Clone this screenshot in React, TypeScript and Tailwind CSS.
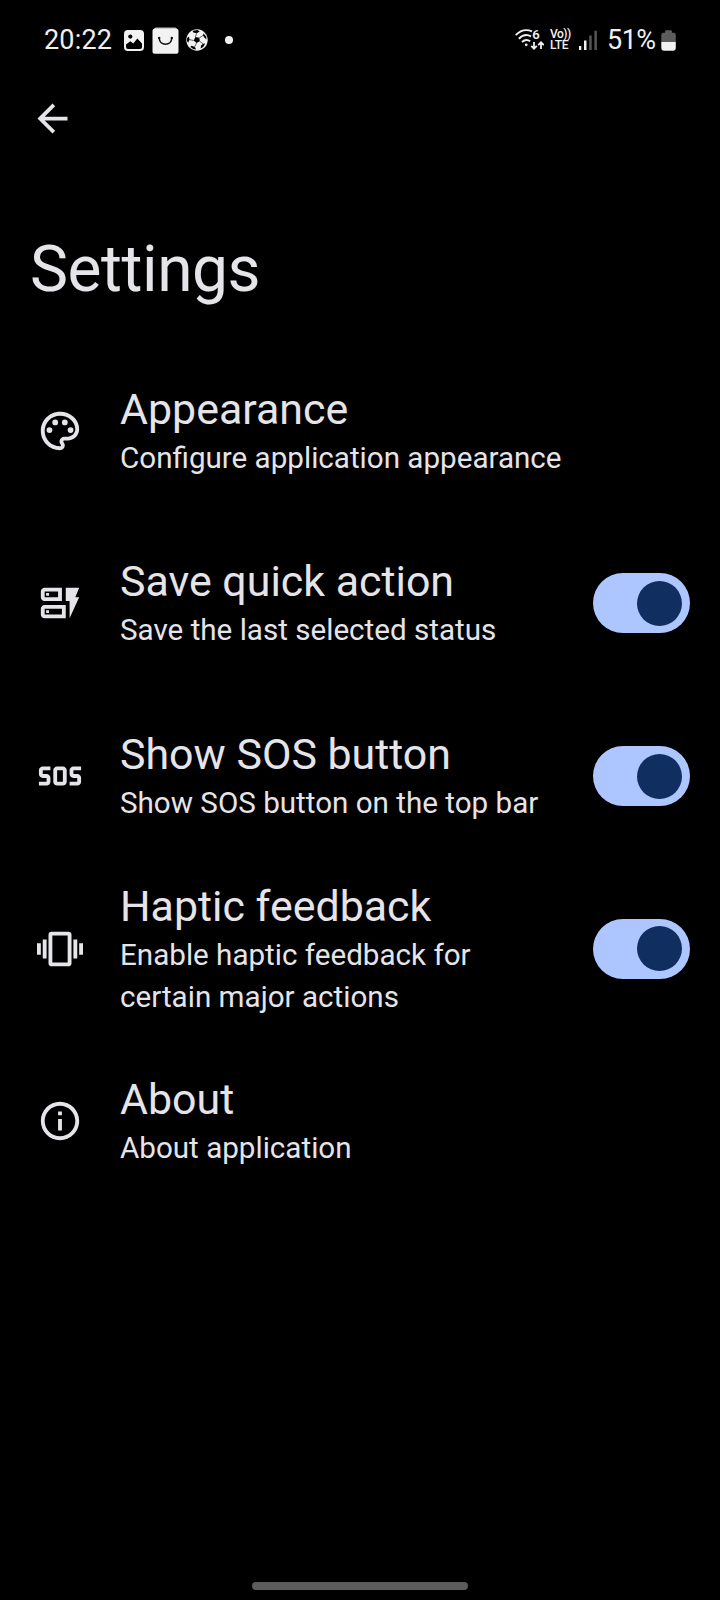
import type { ReactNode } from "react";
import type { IconType } from "react-icons";
import {
  MdArrowBack,
  MdOutlineDynamicForm,
  MdOutlineInfo,
  MdOutlinePalette,
  MdSos,
  MdVibration,
} from "react-icons/md";
import * as Switch from "@radix-ui/react-switch";
import clsx from "clsx";

interface SettingItem {
  title: string;
  description: string;
  icon: IconType;
  toggle?: boolean;
}

const settings: SettingItem[] = [
  {
    title: "Appearance",
    description: "Configure application appearance",
    icon: MdOutlinePalette,
  },
  {
    title: "Save quick action",
    description: "Save the last selected status",
    icon: MdOutlineDynamicForm,
    toggle: true,
  },
  {
    title: "Show SOS button",
    description: "Show SOS button on the top bar",
    icon: MdSos,
    toggle: true,
  },
  {
    title: "Haptic feedback",
    description: "Enable haptic feedback for certain major actions",
    icon: MdVibration,
    toggle: true,
  },
  {
    title: "About",
    description: "About application",
    icon: MdOutlineInfo,
  },
];

function GalleryIcon() {
  return (
    <svg width="20" height="21" viewBox="0 0 20 21">
      <rect width="20" height="21" rx="4" fill="#f2f2f2" />
      <circle cx="6.3" cy="6.6" r="2.1" fill="#000" />
      <path
        d="M2 14.6l4.3-3.3 3 2.3L13.3 8.6 18 13.6V17a2 2 0 0 1-2 2H4a2 2 0 0 1-2-2z"
        fill="#000"
      />
    </svg>
  );
}

function StoreIcon() {
  return (
    <svg width="27" height="27" viewBox="0 0 27 27">
      <path d="M2 2.5Q2 .5 4 .5H23Q25 .5 25 2.5z" fill="#bdbdbd" />
      <rect x=".5" y="1.7" width="26" height="25" rx="2" fill="#f2f2f2" />
      <path
        d="M7.2 10.8C7.2 19.3 19.8 19.3 19.8 10.8"
        fill="none"
        stroke="#111"
        strokeWidth="1.5"
      />
      <circle cx="7.2" cy="11" r="1.2" fill="#111" />
      <circle cx="19.8" cy="11" r="1.2" fill="#111" />
    </svg>
  );
}

function FootballIcon() {
  return (
    <svg width="22" height="22" viewBox="0 0 22 22">
      <circle cx="11" cy="11" r="10.7" fill="#f2f2f2" />
      <g fill="#000">
        <path d="M9.4 8l3.9.8.5 3.5-3.3 1.8-2.8-2.6z" />
        <path d="M6.5 1.800L11.500 1l2.200 1.400-3 1.900L7.300 3.500z" />
        <path d="M17.300 4.300l2.800 3.200.4 3-2-1.700-1.400-2.600z" />
        <path d="M19.200 14.600l-2 3.500-2.600 1.300.4-2.800 2.200-1.800z" />
        <path d="M5.400 16.800l3.200 1 1.500 2.500-2.500-.1-3.200-2.100z" />
        <path d="M1.100 8.900l1.900-1.400.5 3.100-1.300 3.200L1 12z" />
      </g>
      <path
        d="M9.400 8L10.600 4.300M13.300 8.800l3.800-2.300M13.800 12.300l3.200 2.500M10.500 14.100l-1.800 3.700M7.700 11.500l-4.300-.9"
        stroke="#000"
        strokeWidth=".6"
      />
    </svg>
  );
}

function WifiIcon() {
  return (
    <svg width="29" height="28" viewBox="0 -3 29 28" fill="none">
      <g stroke="#f0f0f0" strokeWidth="1.9">
        <path d="M.7 6.2Q8 -1.4 17 2.4" />
        <path d="M3.8 9.7Q9.8 3.8 16 7.4" />
        <path d="M7 13Q11 9.3 15.2 12.3" />
        <path d="M19 13v6.200M16.200 16.800l2.800 2.900 2.800-2.900" strokeWidth="1.8" />
        <path d="M26 20v-6.200M23.200 16.200l2.800-2.900 2.800 2.900" strokeWidth="1.8" />
      </g>
      <circle cx="11.2" cy="15.8" r="1.4" fill="#f0f0f0" />
      <text
        x="17.2"
        y="9.7"
        fill="#f0f0f0"
        fontFamily="Roboto, sans-serif"
        fontSize="13"
        fontWeight="600"
      >
        6
      </text>
    </svg>
  );
}

function SignalIcon() {
  return (
    <svg width="18" height="20" viewBox="0 0 18 20">
      <path d="M0 16h2.300v4H0zM5 10.500h2.500V20H5z" fill="#f0f0f0" />
      <path d="M10.200 5.500h2.500V20h-2.500zM15.400.8h2.500V20h-2.500z" fill="#555" />
    </svg>
  );
}

function BatteryIcon() {
  return (
    <svg width="15" height="21" viewBox="0 0 15 21">
      <path
        d="M4 1.500Q4 .3 5.200.3h4.600Q11 .3 11 1.500V2.700h1.500Q14.800 2.700 14.800 5v7H.3V5Q.3 2.700 2.500 2.700H4z"
        fill="#5c5c5c"
      />
      <path d="M.3 12h14.500v6.300q0 2.400-2.400 2.400H2.700Q.3 20.700.3 18.300z" fill="#f2f2f2" />
    </svg>
  );
}

function StatusBar() {
  return (
    <div className="flex h-20 items-center justify-between px-11 text-[27px] text-[#f0f0f0]">
      <div className="flex items-center">
        <span className="w-20 tracking-[0.2px]">20:22</span>
        <GalleryIcon />
        <span className="ml-2">
          <StoreIcon />
        </span>
        <span className="ml-[7px]">
          <FootballIcon />
        </span>
        <span className="ml-[17px] size-2 rounded-full bg-[#f0f0f0]" />
      </div>
      <div className="flex items-center">
        <WifiIcon />
        <div className="ml-[6px] flex w-[21px] flex-col text-[12px] leading-[11.5px] font-medium">
          <span className="tracking-[-0.5px]">Vo))</span>
          <span className="tracking-[-0.3px]">LTE</span>
        </div>
        <span className="ml-2">
          <SignalIcon />
        </span>
        <span className="ml-[10px] w-[54px] tracking-[-0.5px]">51%</span>
        <BatteryIcon />
      </div>
    </div>
  );
}

function Toggle({ label }: { label: string }) {
  return (
    <Switch.Root
      defaultChecked
      aria-label={label}
      className={clsx(
        "flex h-[60px] w-[97.5px] shrink-0 items-center rounded-full bg-[#3a3b40] px-2",
        "data-[state=checked]:justify-end data-[state=checked]:bg-[#adc6ff]"
      )}
    >
      <Switch.Thumb className="block size-[45px] rounded-full bg-[#102f60]" />
    </Switch.Root>
  );
}

function Row({ item, children }: { item: SettingItem; children?: ReactNode }) {
  const Icon = item.icon;
  return (
    <div className="flex h-[172.7px] items-center pl-[37px] pr-[30px]">
      <Icon className="size-[46px] shrink-0" />
      <div className="ml-[37px] flex-1 pr-10">
        <h2 className="text-[42.9px] leading-[52px]">{item.title}</h2>
        <p className="mt-[2px] text-[29.6px] leading-[42px]">
          {item.description}
        </p>
      </div>
      {children}
    </div>
  );
}

export default function App() {
  return (
    <div className="flex h-[1600px] w-[720px] flex-col overflow-hidden bg-black font-['Roboto',sans-serif] text-[#e5e4e9]">
      <StatusBar />

      {/* Top bar */}
      <header className="flex h-[264.3px] flex-col px-[30px]">
        <button aria-label="Back" className="mt-4 size-[45px]">
          <MdArrowBack className="size-[45px]" />
        </button>
        <h1 className="mt-[91px] text-[64px] leading-[76px] tracking-[-0.45px]">
          Settings
        </h1>
      </header>

      <main className="flex-1">
        {settings.map((item) => (
          <Row key={item.title} item={item}>
            {item.toggle && <Toggle label={item.title} />}
          </Row>
        ))}
      </main>

      {/* Gesture handle */}
      <div className="flex h-[18px] justify-center">
        <div className="h-2 w-[216px] rounded-full bg-[#5c5c5c]" />
      </div>
    </div>
  );
}
